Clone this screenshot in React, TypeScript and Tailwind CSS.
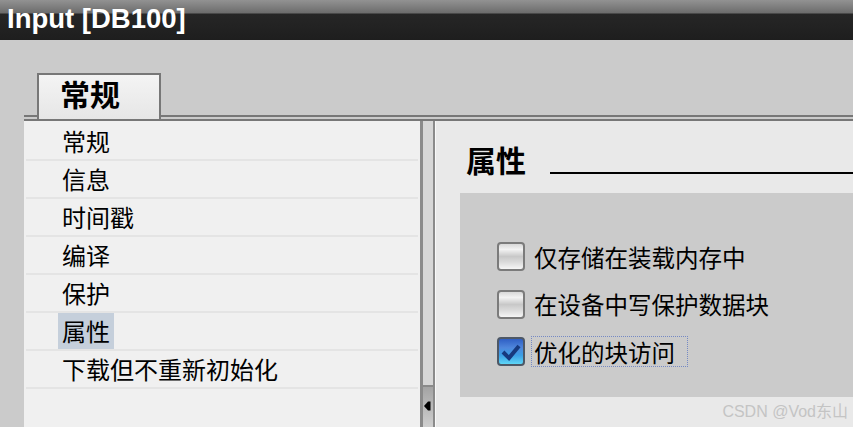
import React from 'react';

const navItems = ['常规', '信息', '时间戳', '编译', '保护', '属性', '下载但不重新初始化'];

const options = [
  { label: '仅存储在装载内存中', checked: false },
  { label: '在设备中写保护数据块', checked: false },
  { label: '优化的块访问', checked: true, focused: true },
];

const CheckBox: React.FC<{ checked: boolean }> = ({ checked }) =>
  checked ? (
    <div className="w-[28px] h-[29px] rounded-[4px] border-2 border-[#4e5866] bg-[linear-gradient(to_bottom,#2f5fc4_0%,#4f86dc_35%,#3b9fe6_65%,#5fd6f6_100%)] flex items-center justify-center">
      <svg width="22" height="20" viewBox="0 0 22 20">
        <path d="M3 10 L9 16 L19 4" fill="none" stroke="#17397e" strokeWidth="4" strokeLinejoin="miter" />
      </svg>
    </div>
  ) : (
    <div className="w-[28px] h-[29px] rounded-[4px] border-2 border-[#7b7b7b] bg-[linear-gradient(to_bottom,#d8d8d8_0%,#f2f2f2_22%,#c8c8c8_50%,#dadada_72%,#f6f6f6_100%)]" />
  );

export default function App() {
  return (
    <div className="relative w-[853px] h-[427px] overflow-hidden bg-[#cbcbcb] font-['Noto_Sans_CJK_SC',sans-serif] text-black">
      {/* title bar */}
      <div className="h-[40px] pl-[7px] bg-[linear-gradient(to_bottom,#929292_0px,#6c6c6c_13px,#262626_14px,#1e1e1e_40px)]">
        <span className="block leading-[38px] text-[27.5px] font-bold text-white font-['Liberation_Sans',sans-serif]">
          Input [DB100]
        </span>
      </div>

      {/* tabs */}
      <div className="mt-[33px] ml-[24px] h-[46px] flex items-end">
        <div className="w-[13px] mb-[2px] border-b-2 border-[#777777]" />
        <div className="w-[124px] h-[46px] border-2 border-b-0 border-[#777777] bg-[linear-gradient(to_bottom,#f4f4f4,#e6e6e6)] pl-[21px] pt-[3px]">
          <span className="block leading-[30px] text-[30px] font-bold">常规</span>
        </div>
        <div className="flex-1 mb-[2px] border-b-2 border-[#777777]" />
      </div>

      {/* content */}
      <div className="ml-[24px] h-[308px] border-t-2 border-[#777777] flex">
        <div className="w-[396px] bg-[#f0f0f0] pt-[2px]">
          {navItems.map((item) => (
            <div key={item} className="mx-[2px] h-[38px] border-b-2 border-[#e4e4e4] pl-[32px] flex items-stretch">
              <span
                className={`px-[4px] flex items-center text-[24px] leading-[24px] ${
                  item === '属性' ? 'bg-[#c5cfdb]' : ''
                }`}
              >
                {item}
              </span>
            </div>
          ))}
        </div>

        {/* splitter */}
        <div className="w-[16px] flex">
          <div className="w-[15px] border-l-[3px] border-r-2 border-[#8a8a8a] flex flex-col">
            <div className="flex-1 bg-[#d6d6d6]" />
            <div className="h-[42px] border-t-2 border-[#8a8a8a] bg-[linear-gradient(to_bottom,#a4a4a4,#cfcfcf)] flex items-center pl-[1px] pb-[2px]">
              <svg width="7" height="10" viewBox="0 0 7 10">
                <polygon points="0,5 4,0.5 6.5,0.5 6.5,9.5 4,9.5" fill="#000" />
              </svg>
            </div>
          </div>
          <div className="w-[1px] bg-[#f8f8f8]" />
        </div>

        <div className="flex-1 bg-[#e9e9e9] pt-[23px]">
          <div className="flex items-start pl-[30px]">
            <span className="leading-[30px] text-[30px] font-bold">属性</span>
            <div className="flex-1 ml-[24px] mt-[28px] h-[2px] bg-black" />
          </div>

          <div className="mt-[19px] ml-[24px] h-[204px] bg-[#cbcbcb] pt-[40px] pl-[37px]">
            {options.map((opt) => (
              <div key={opt.label} className="h-[47.5px] flex items-center">
                <CheckBox checked={opt.checked} />
                {opt.focused ? (
                  <span className="ml-[6px] h-[31px] border border-dotted border-[#7589c4] pl-[2px] pr-[12px] flex items-center text-[23.5px] leading-[24px]">
                    {opt.label}
                  </span>
                ) : (
                  <span className="ml-[9px] text-[23.5px] leading-[24px]">{opt.label}</span>
                )}
              </div>
            ))}
          </div>
        </div>
      </div>

      {/* watermark */}
      <span className="absolute right-[5px] bottom-[6px] text-[16px] leading-[18px] text-[#c4c4c4] font-['Liberation_Sans','Noto_Sans_CJK_SC',sans-serif]">
        CSDN @Vod东山
      </span>
    </div>
  );
}
